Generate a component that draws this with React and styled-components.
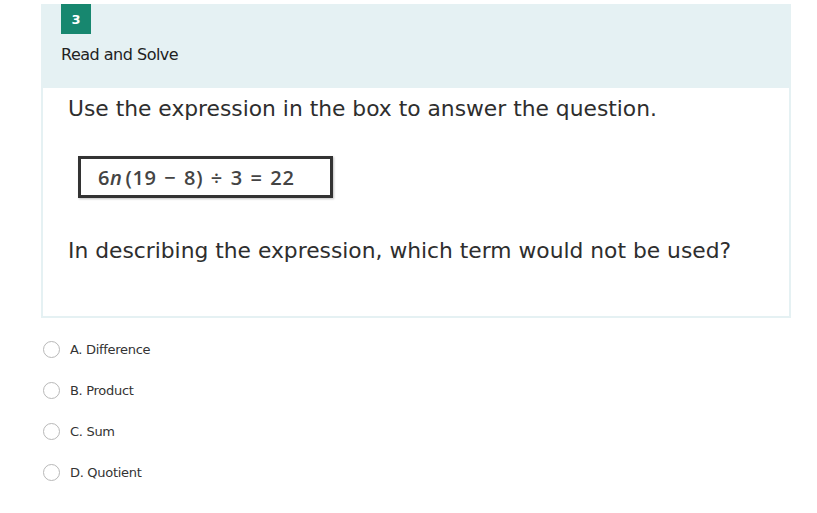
import styled, { createGlobalStyle } from "styled-components";

const GlobalStyle = createGlobalStyle`
    body {
        margin: 0;
        background: #ffffff;
        font-family: "DejaVu Sans", Verdana, sans-serif;
    }
`;

const Page = styled.div`
    width: 817px;
    height: 513px;
    padding: 4px 26px 0 41px;
    box-sizing: border-box;
`;

const Panel = styled.div`
    width: 750px;
    background: #e5f1f3;
    padding-bottom: 2px;
`;

const Header = styled.div`
    padding: 0 20px;
    height: 84px;
`;

const Badge = styled.div`
    width: 30px;
    height: 30px;
    background: #17876f;
    color: #ffffff;
    font-family: "DejaVu Sans", sans-serif;
    font-weight: bold;
    font-size: 13px;
    display: flex;
    align-items: center;
    justify-content: center;
`;

const Title = styled.div`
    margin-top: 11px;
    font-size: 16px;
    color: #222;
    letter-spacing: -0.5px;
`;

const Body = styled.div`
    background: #ffffff;
    margin: 0 2px;
    height: 228px;
    padding: 6px 0 0 25px;
    box-sizing: border-box;
`;

const Prompt = styled.p`
    margin: 0;
    font-size: 21.8px;
    color: #2e2e2e;
    line-height: 30px;
`;

const ExprBox = styled.div`
    margin: 32px 0 0 10px;
    width: 232px;
    height: 36px;
    border: 3px solid #333;
    box-shadow: 1px 1px 2px rgba(0, 0, 0, 0.25);
    display: flex;
    align-items: center;
    padding-left: 17px;
    box-sizing: content-box;
    font-family: "Open Sans", "Liberation Sans", sans-serif;
    font-weight: 600;
    font-size: 20px;
    color: #444;
    letter-spacing: 0.6px;
    word-spacing: 2px;
    white-space: pre;
`;

const Var = styled.i`
    margin-right: 3px;
`;

const Question = styled(Prompt)`
    margin-top: 38px;
`;

const Options = styled.div`
    margin-top: 21px;
    display: flex;
    flex-direction: column;
    gap: 21px;
`;

const Option = styled.label`
    display: flex;
    align-items: center;
    gap: 10px;
    margin-left: 2px;
    height: 20px;
    font-size: 13px;
    color: #333;
    letter-spacing: -0.3px;
`;

const Radio = styled.span`
    width: 15px;
    height: 15px;
    border: 1px solid #b8b8b8;
    border-radius: 50%;
    background: #fff;
    flex-shrink: 0;
`;

const choices = ["A. Difference", "B. Product", "C. Sum", "D. Quotient"];

const App = () => {
    return (
        <Page>
            <GlobalStyle />
            <Panel>
                <Header>
                    <Badge>3</Badge>
                    <Title>Read and Solve</Title>
                </Header>
                <Body>
                    <Prompt>Use the expression in the box to answer the question.</Prompt>
                    <ExprBox>
                        6<Var>n</Var>(19 − 8) ÷ 3 = 22
                    </ExprBox>
                    <Question>In describing the expression, which term would not be used?</Question>
                </Body>
            </Panel>
            <Options>
                {choices.map((c) => (
                    <Option key={c}>
                        <Radio />
                        {c}
                    </Option>
                ))}
            </Options>
        </Page>
    );
};

export default App;
